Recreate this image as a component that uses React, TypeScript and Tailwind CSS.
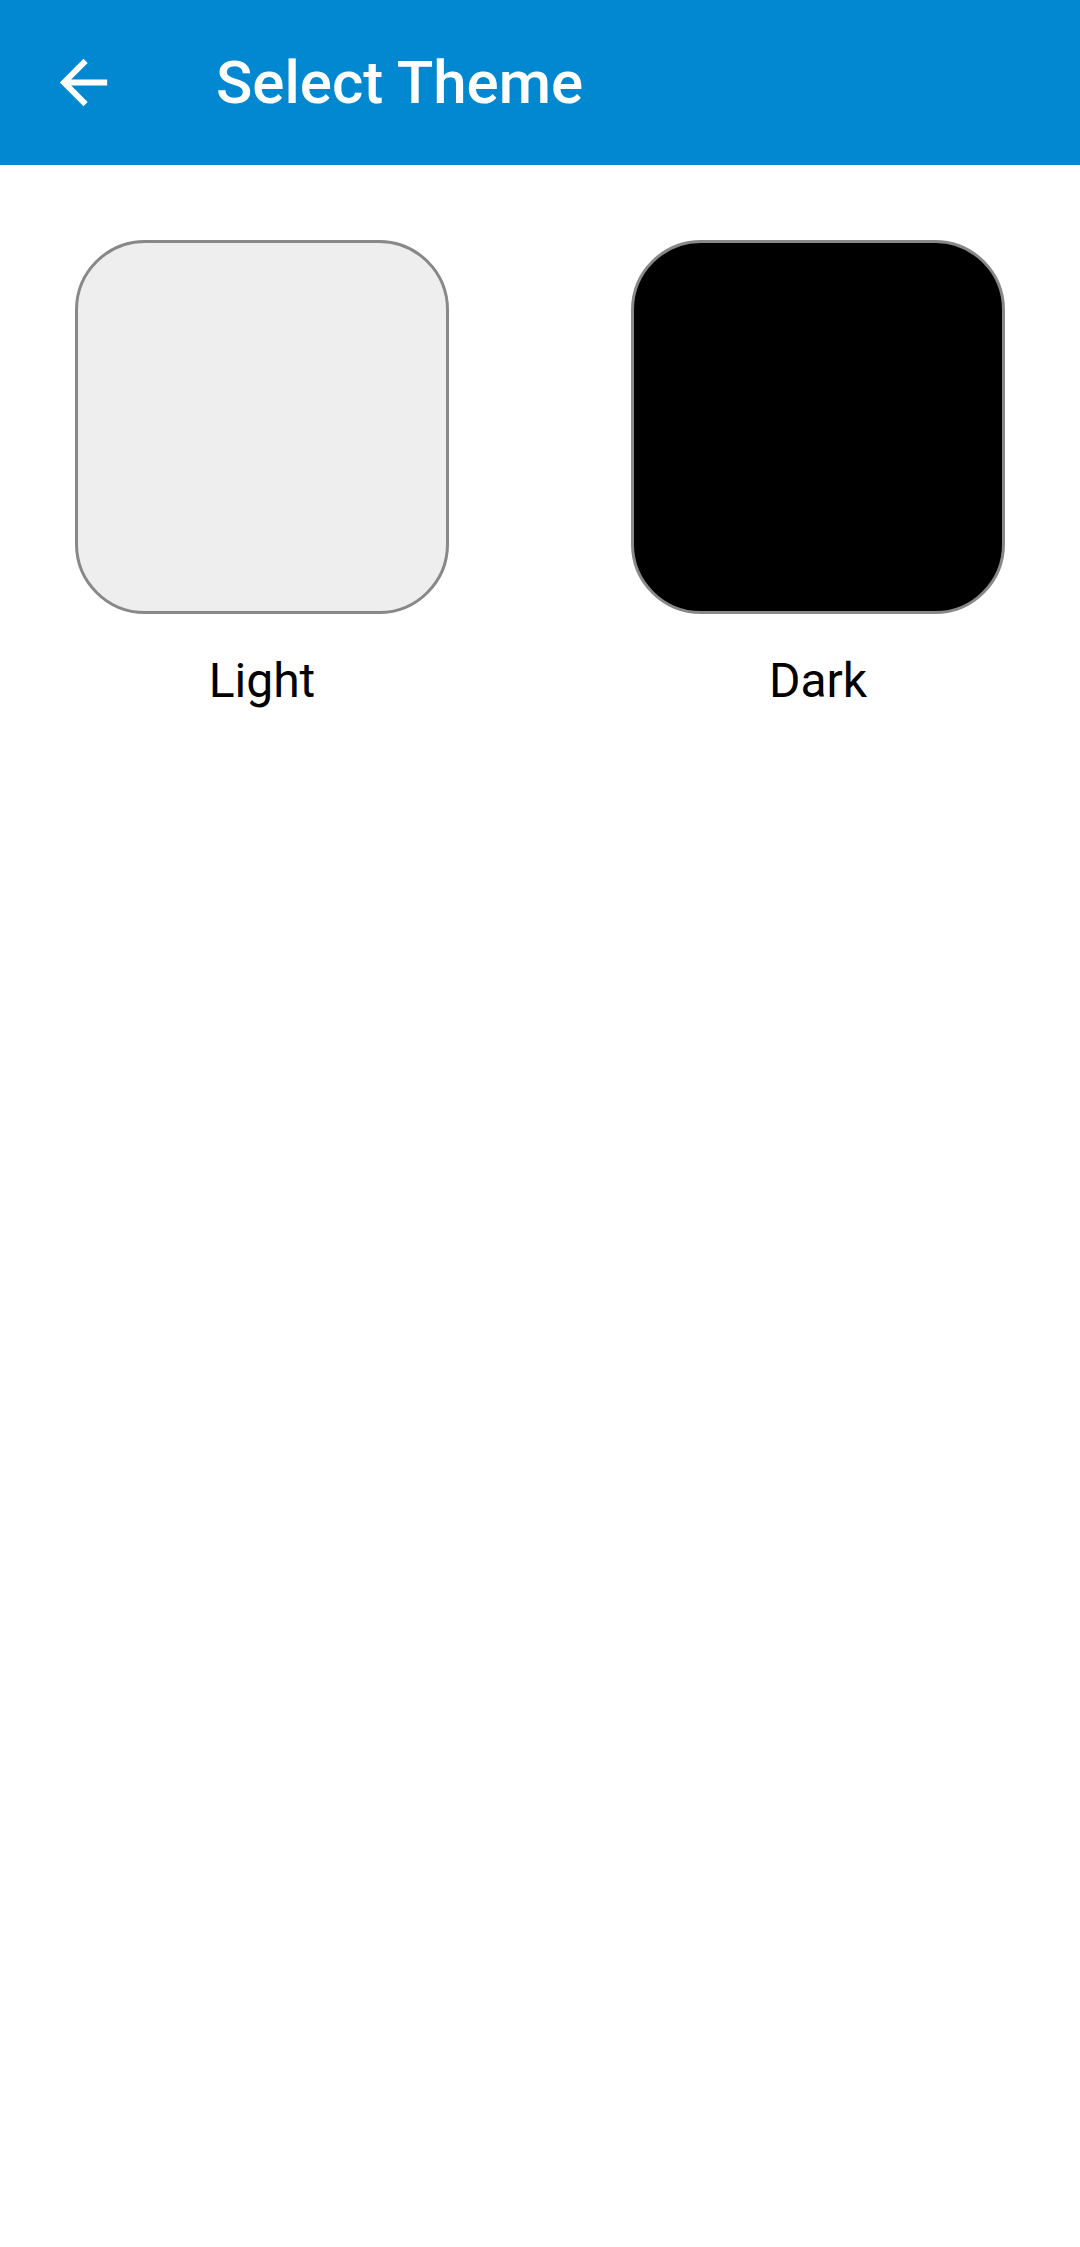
import React from "react";

// Theme option tile with label underneath
function ThemeOption({ label, swatch }: { label: string; swatch: string }) {
  return (
    <div className="flex flex-col items-center">
      <div className={`w-[374px] h-[374px] rounded-[70px] border-[3px] border-[#888888] ${swatch}`} />
      <span className="mt-[43px] text-[48px] leading-none text-black">{label}</span>
    </div>
  );
}

export default function App() {
  return (
    <div className="w-[1080px] min-h-[2247px] bg-white" style={{ fontFamily: "Roboto, 'Noto Sans', sans-serif" }}>
      <header className="h-[165px] bg-[#0288D1] flex items-center">
        <div className="w-[71px] h-[71px] ml-[48px] flex items-center justify-center">
          <svg viewBox="0 0 24 24" className="w-[71px] h-[71px]" fill="white">
            <path d="M20 11H7.83l5.59-5.59L12 4l-8 8 8 8 1.41-1.41L7.83 13H20v-2z" />
          </svg>
        </div>
        <h1 className="ml-[97px] text-[60px] leading-none font-medium text-white">Select Theme</h1>
      </header>

      <main className="flex justify-between px-[75px] pt-[75px]">
        <ThemeOption label="Light" swatch="bg-[#EEEEEE]" />
        <ThemeOption label="Dark" swatch="bg-black" />
      </main>
    </div>
  );
}
